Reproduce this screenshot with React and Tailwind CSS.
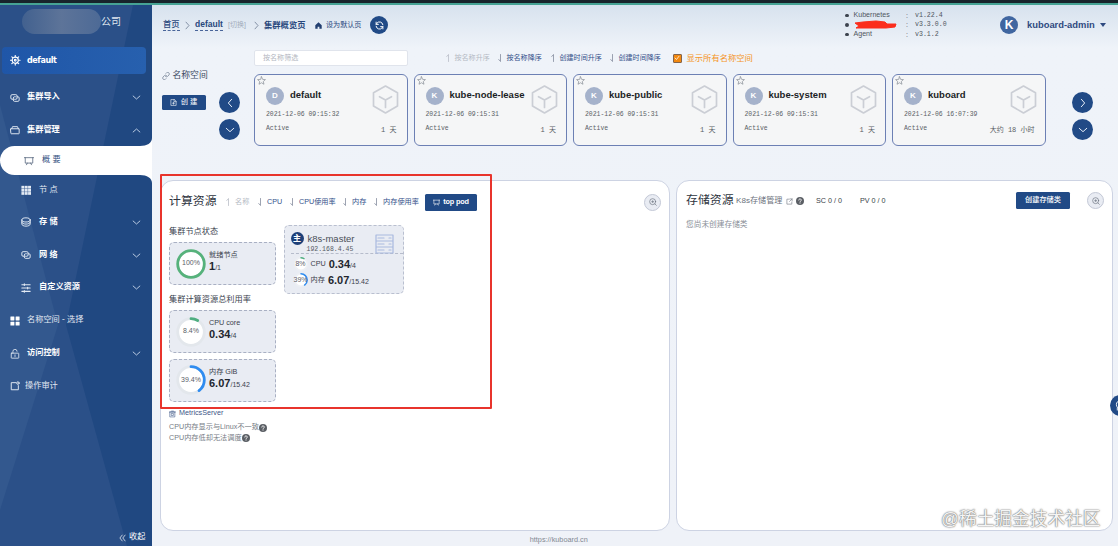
import React from 'react';

const sans = "font-['Liberation_Sans','Noto_Sans_CJK_SC',sans-serif]";
const mono = "font-['Liberation_Mono','Noto_Sans_CJK_SC',monospace]";

function Svg({ className = '', vb = '0 0 24 24', sw = 2, children }) {
  return (
    <svg viewBox={vb} className={`block shrink-0 ${className}`} fill="none" stroke="currentColor" strokeWidth={sw} strokeLinecap="round" strokeLinejoin="round">
      {children}
    </svg>
  );
}

const Chevron = ({ dir = 'down', className = '', sw = 2 }) => {
  const d = { down: 'M3 8l9 8 9-8', up: 'M3 16l9-8 9 8', left: 'M16 3l-8 9 8 9', right: 'M8 3l8 9-8 9' }[dir];
  return <Svg className={className} sw={sw}><path d={d} /></Svg>;
};

const Connection = ({ className }) => (
  <Svg className={className} sw={2.3}>
    <path d="M7 15H5a3 3 0 0 1-3-3V7a3 3 0 0 1 3-3h9a3 3 0 0 1 3 3v5a3 3 0 0 1-3 3h-3" />
    <path d="M17 9h2a3 3 0 0 1 3 3v5a3 3 0 0 1-3 3h-8a3 3 0 0 1-3-3v-5a3 3 0 0 1 3-3h2" />
  </Svg>
);
const Box = ({ className }) => (
  <Svg className={className} sw={2.3}><path d="M2 9h20v11a1 1 0 0 1-1 1H3a1 1 0 0 1-1-1zM4 9l2-5h12l2 5" /></Svg>
);
const Board = ({ className }) => (
  <Svg className={className}><path d="M1 4h22M3 4v13h18V4M8 17l-2 4M16 17l2 4" /></Svg>
);
const Grid9 = ({ className }) => (
  <svg viewBox="0 0 24 24" className={`block shrink-0 ${className}`} fill="currentColor">
    {[1, 9, 17].map((x) => [2, 9.5, 17].map((y) => <rect key={`${x}-${y}`} x={x} y={y} width="7" height="6.6" />))}
  </svg>
);
const Grid4 = ({ className }) => (
  <svg viewBox="0 0 24 24" className={`block shrink-0 ${className}`} fill="#fff">
    {[1, 13.5].map((x) => [1, 13.5].map((y) => <rect key={`${x}-${y}`} x={x} y={y} width="9.5" height="9.5" rx="1" />))}
  </svg>
);
const Coins = ({ className }) => (
  <Svg className={className} sw={2.3}>
    <ellipse cx="12" cy="7" rx="10" ry="5" />
    <path d="M2 7v5c0 2.800 4.500 5 10 5s10-2.200 10-5V7M2 12v5c0 2.800 4.500 5 10 5s10-2.200 10-5v-5" />
  </Svg>
);
const Sliders = ({ className }) => (
  <Svg className={className} sw={2.6}><path d="M2 4h20M2 12h20M2 20h20M8 2v4M16 10v4M8 18v4" /></Svg>
);
const Lock = ({ className }) => (
  <Svg className={className}><rect x="3" y="10" width="18" height="12" rx="1" /><path d="M7 10V6a5 5 0 0 1 10-.5M12 14v4" /></Svg>
);
const Message = ({ className }) => (
  <Svg className={className} sw={2.3}><path d="M14 4H3v17h17V11" /><circle cx="19" cy="5" r="3" /></Svg>
);
const Gear = ({ className }) => (
  <Svg className={className} sw={2.6}>
    <circle cx="12" cy="12" r="7" /><circle cx="12" cy="12" r="2" />
    <path d="M12 1v3M12 20v3M1 12h3M20 12h3M4.200 4.200l2 2M17.800 17.800l2 2M4.200 19.800l2-2M17.800 6.200l2-2" />
  </Svg>
);
const Arrow = ({ up, className = '' }) => (
  <Svg className={`w-[5px] h-[8px] ${className}`} vb="0 0 10 16" sw={1.5}>
    <path d={up ? 'M5 15V1L1.500 5' : 'M5 1v14L1.500 11'} />
  </Svg>
);
const Question = ({ className = '' }) => (
  <svg viewBox="0 0 16 16" className={`block shrink-0 w-[8px] h-[8px] ${className}`}>
    <circle cx="8" cy="8" r="8" fill="#5b5f65" />
    <path d="M5.500 6.200a2.500 2.500 0 1 1 3.500 2.300c-.7.3-1 .6-1 1.300M8 12v.4" stroke="#fff" strokeWidth="1.700" fill="none" strokeLinecap="round" />
  </svg>
);
const Magnifier = () => (
  <span className="flex h-[17px] w-[17px] shrink-0 items-center justify-center rounded-full border border-[#c3c8d6] bg-[#e9ecf3] text-[#6d7480]">
    <Svg className="h-[8px] w-[8px]"><circle cx="11" cy="11" r="9" /><path d="M18 18l4 4M8 11h6M11 8v6" /></Svg>
  </span>
);

function Row({ icon: Icon, label, h = 'h-[33px]', sub, bold = true, arrow, gap }) {
  return (
    <div className={`flex ${h} items-center pr-[11px] text-white ${sub ? 'pl-[21px]' : 'pl-[10px]'}`}>
      <Icon className="h-[10px] w-[10px] text-[#e3eaf4]" />
      <span className={`whitespace-nowrap text-[8.2px] ${gap || (sub ? 'ml-[8px]' : 'ml-[7px]')} ${bold ? 'font-bold' : 'text-[#e3e9f2]'}`}>{label}</span>
      {arrow && <Chevron dir={arrow} className="ml-auto h-[9px] w-[9px] text-[#c9d8ec]" sw={2.4} />}
    </div>
  );
}

function Sidebar() {
  return (
    <aside className="relative flex w-[151.500px] shrink-0 flex-col overflow-hidden bg-[#204881]">
      <svg className="absolute inset-0 h-full w-full" viewBox="0 5 151.500 541" preserveAspectRatio="none">
        <path d="M0 5H133L66 325L127 546H0Z" fill="#2b5088" />
        <path d="M0 105L58 325L0 510Z" fill="#33588e" />
      </svg>
      <div className="relative flex flex-1 flex-col">
        <div className="flex h-[42px] items-start pl-[22px] pt-[4px]">
          <div className="h-[25px] w-[79px] rounded-full bg-gradient-to-r from-[#42618f] via-[#5d7499] to-[#4d6a96]" />
          <span className="mt-[6px] whitespace-nowrap text-[10px] leading-[14px] text-[#dfe5ee]">公司</span>
        </div>
        <div className="ml-[2px] flex h-[27px] w-[144px] items-center rounded bg-gradient-to-r from-[#1f56a8] to-[#2760ae] pl-[8px] text-white">
          <Gear className="h-[10.500px] w-[10.500px]" />
          <span className="ml-[6.500px] font-['DejaVu_Sans',sans-serif] text-[8px] font-bold tracking-[-0.400px]">default</span>
        </div>
        <div className="h-[7px]" />
        <Row icon={Connection} label="集群导入" arrow="down" />
        <Row icon={Box} label="集群管理" arrow="up" h="h-[32px]" />
        <div className="relative flex h-[29px] items-center rounded-l-full bg-white pl-[24px] text-[#33527f]">
          <svg className="absolute -top-[8px] right-0 h-[8px] w-[12px]" viewBox="0 0 12 8"><path d="M12 0C12 5 7 8 0 8H12Z" fill="#fff" /></svg>
          <svg className="absolute -bottom-[8px] right-0 h-[8px] w-[12px]" viewBox="0 0 12 8"><path d="M12 8C12 3 7 0 0 0H12Z" fill="#fff" /></svg>
          <Board className="h-[10px] w-[10px] text-[#5c6b82]" />
          <span className="ml-[8px] whitespace-nowrap text-[8.200px]">概 要</span>
        </div>
        <Row icon={Grid9} label="节 点" sub bold={false} h="h-[30px]" />
        <Row icon={Coins} label="存 储" sub arrow="down" h="h-[34px]" />
        <Row icon={Connection} label="网 络" sub arrow="down" h="h-[32px]" />
        <Row icon={Sliders} label="自定义资源" sub arrow="down" />
        <Row icon={Grid4} label="名称空间 - 选择" bold={false} />
        <Row icon={Lock} label="访问控制" arrow="down" />
        <Row icon={Message} label="操作审计" bold={false} h="h-[32px]" gap="ml-[5px]" />
        <div className="mt-auto flex h-[17px] items-center justify-end pr-[6px] text-white">
          <Svg className="mr-[3px] h-[8px] w-[7px]" sw={2.4}><path d="M11 2l-8 10 8 10M21 2l-8 10 8 10" /></Svg>
          <span className="text-[8.200px]">收起</span>
        </div>
      </div>
    </aside>
  );
}

function Header() {
  return (
    <header className="flex h-[40px] items-center whitespace-nowrap pl-[11.500px] text-[8.300px] text-[#28477c]">
      <span className="w-[17px] border-b border-dashed border-[#49659a] font-medium leading-[11px]">首页</span>
      <Chevron dir="right" className="ml-[3px] h-[9px] w-[9px] text-[#7b889d]" sw={2.4} />
      <span className="ml-[3px] w-[28px] border-b border-dashed border-[#49659a] text-[8.500px] font-bold leading-[11px]">default</span>
      <span className="ml-[5px] w-[19px] text-[7px] text-[#a2acba]">[切换]</span>
      <Chevron dir="right" className="ml-[5px] h-[9px] w-[9px] text-[#7b889d]" sw={2.4} />
      <span className="ml-[3px] w-[42px] font-bold">集群概览页</span>
      <svg viewBox="0 0 24 24" className="ml-[9px] h-[7px] w-[7px] shrink-0 fill-[#223f70]"><path d="M12 1L1 11v12h8v-7h6v7h8V11z" /></svg>
      <span className="ml-[4px] w-[36px] text-[7.100px]">设为默认页</span>
      <span className="ml-[8px] flex h-[18px] w-[18px] shrink-0 items-center justify-center rounded-full bg-[#214a86] text-white">
        <Svg className="h-[9px] w-[9px]" sw={2.6}><path d="M21 10A9 9 0 0 0 5 6L3 9M3 3v6h6M3 14a9 9 0 0 0 16 4l2-3M21 21v-6h-6" /></Svg>
      </span>
      <div className="ml-auto flex w-[155px] flex-col text-[7px] leading-[9.300px] text-[#4f5660]">
        {[['Kubernetes', 'v1.22.4'], ['', 'v3.3.0.0'], ['Agent', 'v3.1.2']].map(([n, v]) => (
          <div key={v} className="flex h-[9.300px] items-center">
            <span className="h-[3.500px] w-[3.500px] rounded-full bg-[#3c434e]" />
            <span className="ml-[5px] flex h-[9.300px] w-[49px] items-center text-[7.100px]">
              {n || (
                <svg viewBox="0 0 43 10" className="h-[10px] w-[43px]"><path d="M1 3L9 2 22 1l9 1 2 2 9 0-1 3-9 1-15 0L2 8l3-2z" fill="#fb2d1c" stroke="#fb2d1c" strokeLinejoin="round" /></svg>
              )}
            </span>
            <span className="w-[9px] text-center">:</span>
            <span className={`${mono} ml-[3.500px] text-[6.600px]`}>{v}</span>
          </div>
        ))}
      </div>
      <span className="flex h-[18px] w-[18px] items-center justify-center rounded-full bg-[#4066a0] text-[12px] font-bold text-white">K</span>
      <span className="ml-[9px] w-[69px] text-[9.400px] font-bold text-[#2f4a80]">kuboard-admin</span>
      <span className="ml-[4px] mr-[12px] h-0 w-0 border-x-[3px] border-t-[4px] border-x-transparent border-t-[#2f4a80]" />
    </header>
  );
}

function RoundButton({ dir }) {
  return (
    <span className="flex h-[21px] w-[21px] items-center justify-center rounded-full bg-[#214a86] text-[#e4ecf7]">
      <Chevron dir={dir} className="h-[10px] w-[10px]" sw={2.4} />
    </span>
  );
}

function NsCard({ letter, name, date, age }) {
  return (
    <div className="flex h-[72px] w-[153.500px] shrink-0 rounded-[6px] border border-[#6c80b4] bg-[#f5f6f7]">
      <Svg className="ml-[2px] mt-[1px] h-[9px] w-[9px] text-[#7d838c]" sw={1.7}>
        <path d="M12 2l3 7 7.500.6-5.700 5 1.800 7.400L12 18l-6.600 4 1.800-7.400-5.700-5L9 9z" />
      </Svg>
      <div className="flex flex-1 flex-col pr-[10px] pt-[11px]">
        <div className="flex h-[19px] items-center">
          <span className="flex h-[18px] w-[18px] items-center justify-center rounded-full bg-[#a5b2cb] text-[8px] font-bold text-white">{letter}</span>
          <span className="ml-[6px] flex-1 whitespace-nowrap text-[9.500px] font-bold text-[#1b1e25]">{name}</span>
          <Svg className="-mb-[7px] -mr-[2px] h-[31px] w-[27px] text-[#cbced5]" vb="0 0 27 31" sw={1.7}>
            <path d="M13.500 2L25.500 8.700V22L13.500 29 1.500 22V8.700zM7.500 12.700l6 3.300 6-3.300M13.500 16v7.500" />
          </Svg>
        </div>
        <div className={`${mono} mt-[5px] whitespace-nowrap text-[6.450px] leading-[10px] text-[#5b5f66]`}>{date}</div>
        <div className={`${mono} mt-[4px] flex justify-between whitespace-nowrap text-[6.450px] leading-[10px] text-[#5b5f66]`}>
          <span>Active</span>
          <span className="pt-[0.500px] text-[7px]">{age}</span>
        </div>
      </div>
    </div>
  );
}

const spaces = [
  ['D', 'default', '2021-12-06 09:15:32', '1 天'],
  ['K', 'kube-node-lease', '2021-12-06 09:15:31', '1 天'],
  ['K', 'kube-public', '2021-12-06 09:15:31', '1 天'],
  ['K', 'kube-system', '2021-12-06 09:15:31', '1 天'],
  ['K', 'kuboard', '2021-12-06 16:07:39', '大约 18 小时'],
];

function SortItem({ up, muted, w, ml, children }) {
  return (
    <span className={`flex items-center whitespace-nowrap ${ml} ${muted ? 'text-[#b5bac4]' : 'text-[#34508a]'}`}>
      <Arrow up={up} className={muted ? 'text-[#b5bac4]' : 'text-[#7d8698]'} />
      <span className={`ml-[4px] ${w}`}>{children}</span>
    </span>
  );
}

function Namespaces() {
  return (
    <section className="flex h-[135px] shrink-0 pl-[10px] pt-[5px]">
      <div className="flex w-[92.500px] shrink-0 flex-col pt-[20px]">
        <div className="flex h-[12px] items-center text-[8.800px] text-[#3c4a63]">
          <Svg className="mr-[3px] h-[8px] w-[8px] text-[#67748a]"><path d="M10 13a5 5 0 0 0 7 0l4-4a5 5 0 0 0-7-7l-2 2M14 11a5 5 0 0 0-7 0l-4 4a5 5 0 0 0 7 7l2-2" /></Svg>
          <span className="whitespace-nowrap">名称空间</span>
        </div>
        <div className="mt-[10px] flex items-start justify-between pr-[14px]">
          <span className="mt-[2.500px] flex h-[15px] w-[44px] items-center justify-center rounded-[1.500px] bg-[#214a86] text-[7.300px] text-white">
            <Svg className="mr-[4px] h-[7px] w-[7px]"><path d="M14 2H3v20h18V9zM14 2v7h7M12 11v7M8.500 14.500h7" /></Svg>
            创 建
          </span>
          <div className="flex flex-col gap-[6px]">
            <RoundButton dir="left" />
            <RoundButton dir="down" />
          </div>
        </div>
      </div>
      <div className="w-[792px] shrink-0">
        <div className="flex h-[16px] items-center text-[7.050px]">
          <div className="flex h-[16px] w-[153.500px] items-center rounded-[2px] border border-[#e0e4ec] bg-white pl-[8px] text-[#b3b7bf]">按名称筛选</div>
          <SortItem up muted ml="ml-[38px]" w="w-[35px]">按名称升序</SortItem>
          <SortItem ml="ml-[8px]" w="w-[36px]">按名称降序</SortItem>
          <SortItem up ml="ml-[8px]" w="w-[43px]">创建时间升序</SortItem>
          <SortItem ml="ml-[7px]" w="w-[43px]">创建时间降序</SortItem>
          <span className="ml-[11px] flex h-[9px] w-[9px] items-center justify-center rounded-[1px] border border-[#84644a] bg-[#f3890f] text-white">
            <Svg className="h-[6px] w-[6px]" sw={3}><path d="M4 12l6 6L20 5" /></Svg>
          </span>
          <span className="ml-[5px] whitespace-nowrap text-[8.300px] text-[#f59425]">显示所有名称空间</span>
        </div>
        <div className="mt-[8px] flex gap-[6px]">
          {spaces.map(([l, n, d, a]) => <NsCard key={n} letter={l} name={n} date={d} age={a} />)}
        </div>
      </div>
      <div className="flex flex-col gap-[6px] pl-[26px] pt-[42px]">
        <RoundButton dir="right" />
        <RoundButton dir="down" />
      </div>
    </section>
  );
}

function Ring({ pct, color, size, r, sw, text, className, track = '#e3e7ec' }) {
  const c = 2 * Math.PI * r;
  const m = size / 2;
  return (
    <span className={`relative flex shrink-0 items-center justify-center ${className}`}>
      <svg viewBox={`0 0 ${size} ${size}`} className="absolute inset-0 h-full w-full -rotate-90">
        <circle cx={m} cy={m} r={r} fill="#fff" stroke={track} strokeWidth={sw} />
        <circle cx={m} cy={m} r={r} fill="none" stroke={color} strokeWidth={sw} strokeLinecap="round" strokeDasharray={`${c * pct} ${c}`} />
      </svg>
      <span className="relative whitespace-nowrap text-[7px] text-[#5b6068]">{text}</span>
    </span>
  );
}

function Stat({ label, value, total, pct, text, color }) {
  return (
    <div className="flex h-[43px] w-[107px] items-center rounded-[5px] border border-dashed border-[#a9b0c3] bg-[#e9ecf3] pl-[6px]">
      <Ring pct={pct} color={color} size={30} r={13.3} sw={2.8} text={text} className="h-[30px] w-[30px]" />
      <div className="-mt-[4px] ml-[3px] flex flex-col whitespace-nowrap text-[#3b414c]">
        <span className="text-[7.200px] leading-[11px]">{label}</span>
        <span className="text-[7px] leading-[13px]"><b className="text-[11px] text-[#22262e]">{value}</b>/{total}</span>
      </div>
    </div>
  );
}

function NodeLine({ pct, text, color, label, value, total }) {
  return (
    <div className="flex h-[16px] items-center whitespace-nowrap text-[7.200px] text-[#3b414c]">
      <Ring pct={pct} color={color} size={14} r={6.2} sw={1.5} text={text} track="#eef0f4" className="h-[14px] w-[14px]" />
      <span className="ml-[3px]">{label}</span>
      <span className="ml-[3px] text-[7px]"><b className="text-[11px] text-[#22262e]">{value}</b>/{total}</span>
    </div>
  );
}

function Compute() {
  return (
    <section className="flex h-[351px] w-[510px] shrink-0 flex-col rounded-[13px] border border-[#cdd3e3] bg-white pl-[8px]">
      <div className="flex h-[42px] items-center text-[7.200px]">
        <h2 className="w-[48px] whitespace-nowrap text-[11.900px] text-[#2e3440]">计算资源</h2>
        <SortItem up muted ml="ml-[9px]" w="w-[15px]">名称</SortItem>
        <SortItem ml="ml-[8px]" w="w-[16px]">CPU</SortItem>
        <SortItem ml="ml-[7px]" w="w-[37px]">CPU使用率</SortItem>
        <SortItem ml="ml-[7px]" w="w-[15px]">内存</SortItem>
        <SortItem ml="ml-[7px]" w="w-[36px]">内存使用率</SortItem>
        <span className="ml-[6px] flex h-[17px] w-[52px] items-center justify-center rounded-[1.500px] bg-[#214a86] text-[7.300px] font-bold text-white">
          <Board className="mr-[3px] h-[7px] w-[7px]" /><span className="whitespace-nowrap tracking-[-0.200px]">top pod</span>
        </span>
        <span className="ml-auto mr-[8px]"><Magnifier /></span>
      </div>
      <div className="flex">
        <div className="w-[114.500px] text-[8.200px] text-[#3b4350]">
          <div className="flex h-[18px] items-center whitespace-nowrap">集群节点状态</div>
          <div className="h-[1px]" />
          <Stat label="就绪节点" value="1" total="1" pct={1} text="100%" color="#56b27b" />
          <div className="flex h-[25px] items-center whitespace-nowrap pt-[5px]">集群计算资源总利用率</div>
          <Stat label="CPU core" value="0.34" total="4" pct={0.084} text="8.4%" color="#4fae80" />
          <div className="h-[5.500px]" />
          <Stat label="内存 GiB" value="6.07" total="15.42" pct={0.394} text="39.4%" color="#2f8cf0" />
          <div className="mt-[6px] flex h-[12px] items-center text-[7.200px] text-[#3d5687]">
            <Svg className="mr-[3px] h-[8px] w-[7px]"><path d="M4 5h16v17H4zM1 5h22M9 2h6M9 10h6v7H9z" /></Svg>
            MetricsServer
          </div>
          <div className="mt-[3px] flex h-[10.500px] items-center whitespace-nowrap text-[7.200px] text-[#777c85]">CPU内存显示与Linux不一致<Question /></div>
          <div className="flex h-[10.500px] items-center whitespace-nowrap text-[7.200px] text-[#777c85]">CPU内存低却无法调度<Question /></div>
        </div>
        <div className="mt-[2px] flex h-[69px] w-[120px] flex-col rounded-[5px] border border-dashed border-[#b9bfcf] bg-[#e9ecf3] pl-[6px] pt-[6px]">
          <div className="flex h-[22px] border-b border-dashed border-[#b6bccb]">
            <span className="flex h-[13px] w-[13px] items-center justify-center rounded-full bg-[#1d3f78] text-[8px] font-bold text-white">主</span>
            <div className="ml-[4px] flex flex-1 flex-col">
              <span className="text-[9.500px] leading-[13px] text-[#4a5058]">k8s-master</span>
              <span className={`${mono} -ml-[1px] text-[6.500px] leading-[9px] text-[#555b64]`}>192.168.4.45</span>
            </div>
            <Svg className="mr-[9px] mt-[2px] h-[20px] w-[19px] text-[#a9b9df]" vb="0 0 19 20" sw={1.2}>
              <path d="M1 1h17v18H1zM1 7h17M1 13h17M3 4h6M14 4h2M3 10h6M14 10h2M3 16h6M14 16h2" />
            </Svg>
          </div>
          <div className="mt-[2px] flex flex-col pl-[3px]">
            <NodeLine pct={0.08} text="8%" color="#4fae80" label="CPU" value="0.34" total="4" />
            <NodeLine pct={0.39} text="39%" color="#2f8cf0" label="内存" value="6.07" total="15.42" />
          </div>
        </div>
      </div>
    </section>
  );
}

function Storage() {
  return (
    <section className="flex h-[351px] w-[437px] shrink-0 flex-col rounded-[13px] border border-[#cdd3e3] bg-white pl-[9px]">
      <div className="flex h-[39px] items-center whitespace-nowrap text-[8px] text-[#6c727d]">
        <h2 className="w-[50px] text-[11.900px] text-[#2e3440]">存储资源</h2>
        <span className="w-[48px] pt-[1px] text-[8.100px]">K8s存储管理</span>
        <Svg className="ml-[2px] mt-[1px] h-[7px] w-[7px]"><path d="M11 4H3v17h17v-7M14 3h7v7M21 3l-9 9" /></Svg>
        <Question className="ml-[3px] mt-[1px]" />
        <span className="ml-[12px] w-[27px] pt-[2px] text-[7.200px] text-[#3a3f48]">SC 0 / 0</span>
        <span className="ml-[17px] w-[27px] pt-[2px] text-[7.200px] text-[#3a3f48]">PV 0 / 0</span>
        <span className="ml-auto flex h-[17px] w-[54px] items-center justify-center rounded-[1.500px] bg-[#214a86] text-[7.200px] font-medium text-white">创建存储类</span>
        <span className="ml-[17px] mr-[8px]"><Magnifier /></span>
      </div>
      <div className="text-[7.700px] leading-[10px] text-[#8a8f98]">您尚未创建存储类</div>
    </section>
  );
}

export default function App() {
  return (
    <div className={`relative flex h-[546px] w-[1118px] flex-col overflow-hidden bg-[#eff2f9] ${sans}`}>
      <div className="h-[5px] shrink-0 border-b-2 border-[#46a394] bg-[#18242b]" />
      <div className="flex h-[541px]">
        <Sidebar />
        <main className="flex flex-1 flex-col bg-gradient-to-b from-[#d7e2ee] via-[#eff3f9] via-[8%] to-[#eff2f8]">
          <Header />
          <Namespaces />
          <div className="flex gap-[6px] pl-[8.500px]">
            <Compute />
            <Storage />
          </div>
          <footer className="flex h-[15px] items-end justify-center pr-[152px] text-[7.300px] leading-[12px] text-[#838993]">https://kuboard.cn</footer>
        </main>
      </div>
      <div className="pointer-events-none absolute left-[160px] top-[174px] h-[235px] w-[332px] rounded-[1px] border-2 border-[#e8342c]" />
      <div className="absolute left-[1110px] top-[395px] flex h-[21px] w-[21px] items-center rounded-full bg-[#214a86] pl-[5px] text-white">
        <Svg className="h-[11px] w-[11px]"><circle cx="12" cy="10" r="9" /><path d="M5 17v5" /></Svg>
      </div>
      <div className="pointer-events-none absolute left-[941px] top-[507px] whitespace-nowrap text-[17.700px] leading-[24px] text-[#f4f4f4] [text-shadow:0_0_1px_#666,0_0_2px_#777]">@稀土掘金技术社区</div>
    </div>
  );
}
